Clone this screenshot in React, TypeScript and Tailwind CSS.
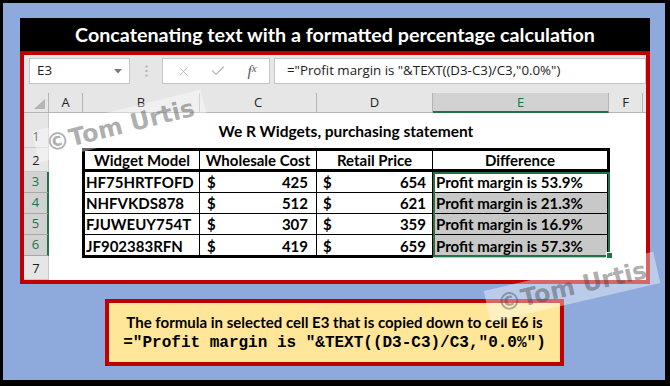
import { X, Check } from "lucide-react";

const rows = [
  { model: "HF75HRTFOFD", cost: 425, price: 654, pct: "53.9%" },
  { model: "NHFVKDS878", cost: 512, price: 621, pct: "21.3%" },
  { model: "FJUWEUY754T", cost: 307, price: 359, pct: "16.9%" },
  { model: "JF902383RFN", cost: 419, price: 659, pct: "57.3%" },
];

const cols = ["A", "B", "C", "D", "E", "F"];
const rowStart = ["row-start-2", "row-start-3", "row-start-4", "row-start-5", "row-start-6", "row-start-7", "row-start-8"];

function Watermark({ className }: { className: string }) {
  return (
    <div
      className={
        "pointer-events-none absolute z-20 flex h-[32px] w-[174px] items-center justify-center bg-white/40 font-['DejaVu_Sans',sans-serif] text-[24px] font-bold leading-none text-[rgba(60,60,60,0.42)] " +
        className
      }
    >
      ©Tom Urtis
    </div>
  );
}

export default function App() {
  return (
    <div className="h-[386px] w-[670px] bg-black pb-[6px] pl-[3px] pr-[5px] pt-[3px]">
      <div className="relative flex h-full flex-col overflow-hidden bg-[#8eaadc] pl-[17px] pr-[15px] pt-[15px]">
        {/* Title */}
        <div className="flex h-[33px] items-center justify-center bg-black pt-[1px] font-['Lato',sans-serif] text-[19.7px] font-bold text-white">
          Concatenating text with a formatted percentage calculation
        </div>

        {/* Excel panel */}
        <div className="flex h-[233px] flex-col border-4 border-[#c00000] bg-[#e6e6e6]">
          {/* Formula bar */}
          <div className="flex h-[38px] shrink-0 items-start pl-[5px] pt-[3px] font-['Open_Sans',sans-serif] text-[13.3px] text-[#222]">
            <div className="flex h-[26px] w-[101px] items-center justify-between border border-[#c6c6c6] bg-white pl-[7px] pr-[7px]">
              <span>E3</span>
              <svg width="8" height="5" viewBox="0 0 8 5">
                <path d="M0 0 L8 0 L4 4.5 Z" fill="#7a7a7a" />
              </svg>
            </div>
            <div className="flex h-[26px] w-[32px] items-center justify-center">
              <svg width="3" height="12" viewBox="0 0 3 12">
                <rect x="0.5" y="0.5" width="2" height="2" fill="#b0b0b0" />
                <rect x="0.5" y="5" width="2" height="2" fill="#b0b0b0" />
                <rect x="0.5" y="9.5" width="2" height="2" fill="#b0b0b0" />
              </svg>
            </div>
            <div className="flex h-[26px] w-[108px] items-center border border-[#c6c6c6] bg-white">
              <div className="flex w-[38px] justify-center pl-[2px]">
                <X size={15} strokeWidth={1.4} color="#b4b4b4" />
              </div>
              <div className="flex w-[34px] justify-center">
                <Check size={16} strokeWidth={1.8} color="#b4b4b4" />
              </div>
              <div className="flex w-[34px] justify-center font-['Liberation_Serif',serif] text-[15px] italic text-[#555]">
                f<span className="text-[11px]">x</span>
              </div>
            </div>
            <div className="ml-[4px] flex h-[26px] flex-1 items-center border border-[#c6c6c6] bg-white pl-[12px]">
              ="Profit margin is "&amp;TEXT((D3-C3)/C3,"0.0%")
            </div>
          </div>

          {/* Sheet grid */}
          <div className="relative grid flex-1 grid-cols-[25px_34px_117px_117px_116px_176px_34px_1fr] grid-rows-[20px_35px_24px_21px_21px_21px_21px_1fr] bg-white font-['Open_Sans',sans-serif] text-[13px] text-[#333]">
            {/* header row */}
            <div className="relative col-start-1 row-start-1 border-b border-r border-[#b4b4b4] bg-[#e6e6e6]">
              <svg className="absolute bottom-[3px] right-[3px]" width="11" height="10" viewBox="0 0 11 10">
                <path d="M11 0 L11 10 L0 10 Z" fill="#b4b4b4" />
              </svg>
            </div>
            {cols.map((c) =>
              c === "E" ? (
                <div
                  key={c}
                  className="row-start-1 flex items-center justify-center border-b-2 border-r border-b-[#217346] border-r-[#b4b4b4] bg-[#d2d2d2] pt-[1px] text-[#217346]"
                >
                  {c}
                </div>
              ) : (
                <div
                  key={c}
                  className="row-start-1 flex items-center justify-center border-b border-r border-[#b4b4b4] bg-[#e6e6e6] text-[#222]"
                >
                  {c}
                </div>
              )
            )}
            <div className="row-start-1 border-b border-[#b4b4b4] bg-[#e6e6e6]" />

            {/* row headers */}
            {[1, 2, 3, 4, 5, 6, 7].map((r) => {
              const sel = r >= 3 && r <= 6;
              return (
                <div
                  key={"h" + r}
                  className={
                    "col-start-1 " +
                    rowStart[r - 1] +
                    (sel
                      ? " flex items-end justify-center border-b border-r-2 border-b-[#a8a8a8] border-r-[#217346] bg-[#d2d2d2] pb-[1px] text-[#217346]"
                      : " flex items-end justify-center border-b border-r border-[#c8c8c8] bg-[#e6e6e6] pb-[1px] text-[#222]")
                  }
                >
                  {r}
                </div>
              );
            })}

            {/* Row 1 title */}
            <div className="col-start-3 col-end-7 row-start-2 flex items-end justify-center pb-[5px] font-['Lato',sans-serif] text-[15.5px] font-bold text-black">
              We R Widgets, purchasing statement
            </div>

            {/* Table */}
            <div className="col-start-3 col-end-7 row-start-3 row-end-8 -mb-[2px] -ml-[1px] -mr-[1px] grid grid-cols-[115px_117px_116px_1fr] grid-rows-[21px_21px_21px_21px_1fr] border-[3px] border-black font-['Lato',sans-serif] text-[15px] font-bold text-black">
              <div className="flex items-center justify-center border-b-[3px] border-r border-black">Widget Model</div>
              <div className="flex items-center justify-center border-b-[3px] border-r border-black">Wholesale Cost</div>
              <div className="flex items-center justify-center border-b-[3px] border-r border-black">Retail Price</div>
              <div className="flex items-center justify-center border-b-[3px] border-black">Difference</div>
              {rows.map((row, i) => {
                const last = i === rows.length - 1;
                const bb = last ? "" : " border-b";
                return [
                  <div key={"m" + i} className={"flex items-center border-r border-black pl-[1px]" + bb}>
                    {row.model}
                  </div>,
                  <div key={"c" + i} className={"flex items-center justify-between border-r border-black pl-[7px] pr-[8px]" + bb}>
                    <span>$</span>
                    <span>{row.cost}</span>
                  </div>,
                  <div key={"p" + i} className={"flex items-center justify-between border-r border-black pl-[6px] pr-[6px]" + bb}>
                    <span>$</span>
                    <span>{row.price}</span>
                  </div>,
                  <div
                    key={"d" + i}
                    className={"flex items-center border-black pl-[3px]" + bb + (i === 0 ? " bg-white" : " bg-[#c8c8c8]")}
                  >
                    Profit margin is {row.pct}
                  </div>,
                ];
              })}
            </div>

            {/* Selection outline E3:E6 */}
            <div className="pointer-events-none relative z-10 col-start-6 col-end-7 row-start-4 row-end-8 -mb-[1px] -mr-[1px] border-2 border-[#217346]">
              <div className="absolute -bottom-[4px] -right-[5px] h-[7px] w-[7px] border border-white bg-[#217346]" />
            </div>
          </div>
        </div>

        {/* Yellow note */}
        <div className="ml-[85px] mt-[15px] flex h-[67px] w-[459px] flex-col items-center justify-center border-4 border-[#c00000] bg-[#ffe699] pt-[1px]">
          <div className="font-['Lato',sans-serif] text-[15px] font-bold leading-[21px] text-black">
            The formula in selected cell E3 that is copied down to cell E6 is
          </div>
          <div className="font-['Liberation_Mono',monospace] text-[16px] font-bold leading-[21px] text-black">
            ="Profit margin is "&amp;TEXT((D3-C3)/C3,"0.0%")
          </div>
        </div>

        <Watermark className="left-[30px] top-[107px] -rotate-[14deg]" />
        <Watermark className="left-[482px] top-[268px] -rotate-[13deg]" />
      </div>
    </div>
  );
}
